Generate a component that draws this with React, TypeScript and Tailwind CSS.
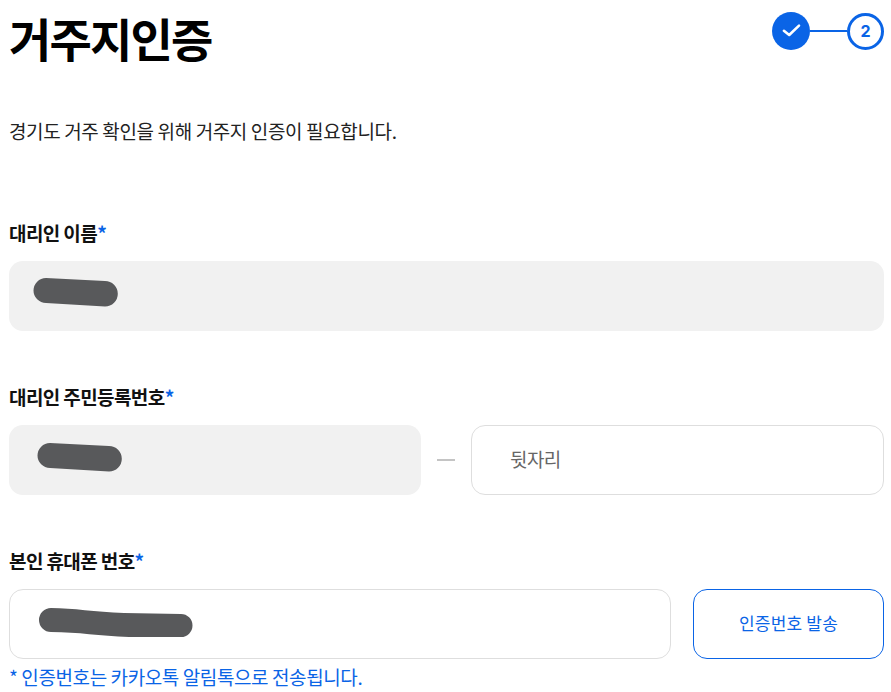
function Scribble({ w, d, className }: { w: number; d: string; className: string }) {
  return (
    <svg width={w} height={30} viewBox={`0 0 ${w} 30`} className={`block shrink-0 ${className}`}>
      <path d={d} fill="#58595b" />
    </svg>
  );
}

const shortScribble = "M13 0 L72 3 A12.8 12.8 0 0 1 72 28.6 L13 25 A12.5 12.5 0 0 1 13 0 Z";
const longScribble =
  "M12 0 C35 0 55 4 85 5 L142 6 A11.5 11.5 0 0 1 142 29 L90 29 C60 28 40 24 12 24 A12 12 0 0 1 12 0 Z";

function Label({ children }: { children: string }) {
  return (
    <div className="h-[28px] text-[19px] leading-[28px] font-bold tracking-[-0.6px] text-[#111]">
      {children}
      <span className="text-[#0a64e6]">*</span>
    </div>
  );
}

export default function App() {
  return (
    <div className="w-[891px] h-[692px] overflow-hidden bg-white pl-[9px] pr-[7px] font-['Noto_Sans_CJK_KR','Noto_Sans',sans-serif]">
      <div className="flex items-start justify-between h-[80px]">
        <h1 className="text-[46px] leading-[74px] font-bold tracking-[-1.8px] text-black">거주지인증</h1>
        <div className="flex items-center mt-[12px]">
          <div className="w-[38px] h-[38px] rounded-full bg-[#0a64e6] flex items-center justify-center">
            <svg width="22" height="22" viewBox="0 0 22 22" fill="none">
              <path d="M3.9 10.8 L9.2 15 L19 5.6" stroke="#fff" strokeWidth="2.6" strokeLinecap="round" strokeLinejoin="round" />
            </svg>
          </div>
          <div className="w-[37px] h-[1.5px] bg-[#0a64e6]" />
          <div className="w-[37px] h-[37px] rounded-full border-[3px] border-[#0a64e6] flex items-center justify-center text-[16px] font-bold text-[#0a64e6] font-['Inter',sans-serif]">
            2
          </div>
        </div>
      </div>

      <p className="mt-[37px] text-[19px] leading-[28px] tracking-[-0.37px] text-[#222]">
        경기도 거주 확인을 위해 거주지 인증이 필요합니다.
      </p>

      <div className="mt-[74px]">
        <Label>대리인 이름</Label>
        <div className="mt-[14px] h-[70px] rounded-[14px] bg-[#f1f1f1] flex items-center pl-[24px]">
          <Scribble w={85} d={shortScribble} className="mb-[6px]" />
        </div>
      </div>

      <div className="mt-[52px]">
        <Label>대리인 주민등록번호</Label>
        <div className="mt-[14px] flex items-center">
          <div className="w-[412px] h-[70px] rounded-[14px] bg-[#f1f1f1] flex items-center pl-[28px]">
            <Scribble w={85} d={shortScribble} className="mb-[4px]" />
          </div>
          <div className="w-[18px] h-[2px] bg-[#c4c4c4] mx-[16px]" />
          <div className="flex-1 h-[70px] rounded-[14px] border border-[#dedede] flex items-center pl-[38px] pb-[2px] text-[19px] tracking-[-0.6px] text-[#666]">
            뒷자리
          </div>
        </div>
      </div>

      <div className="mt-[52px]">
        <Label>본인 휴대폰 번호</Label>
        <div className="mt-[14px] flex gap-[22px]">
          <div className="w-[662px] h-[70px] rounded-[14px] border border-[#dedede] flex items-center pl-[29px]">
            <Scribble w={155} d={longScribble} className="mb-[2px]" />
          </div>
          <div className="flex-1 h-[70px] rounded-[14px] border border-[#0a64e6] flex items-center justify-center pb-[2px] text-[17px] tracking-[0.2px] text-[#0a64e6]">
            인증번호 발송
          </div>
        </div>
        <p className="mt-[4px] text-[19px] leading-[28px] tracking-[-0.4px] text-[#0a64e6]">
          * 인증번호는 카카오톡 알림톡으로 전송됩니다.
        </p>
      </div>
    </div>
  );
}
